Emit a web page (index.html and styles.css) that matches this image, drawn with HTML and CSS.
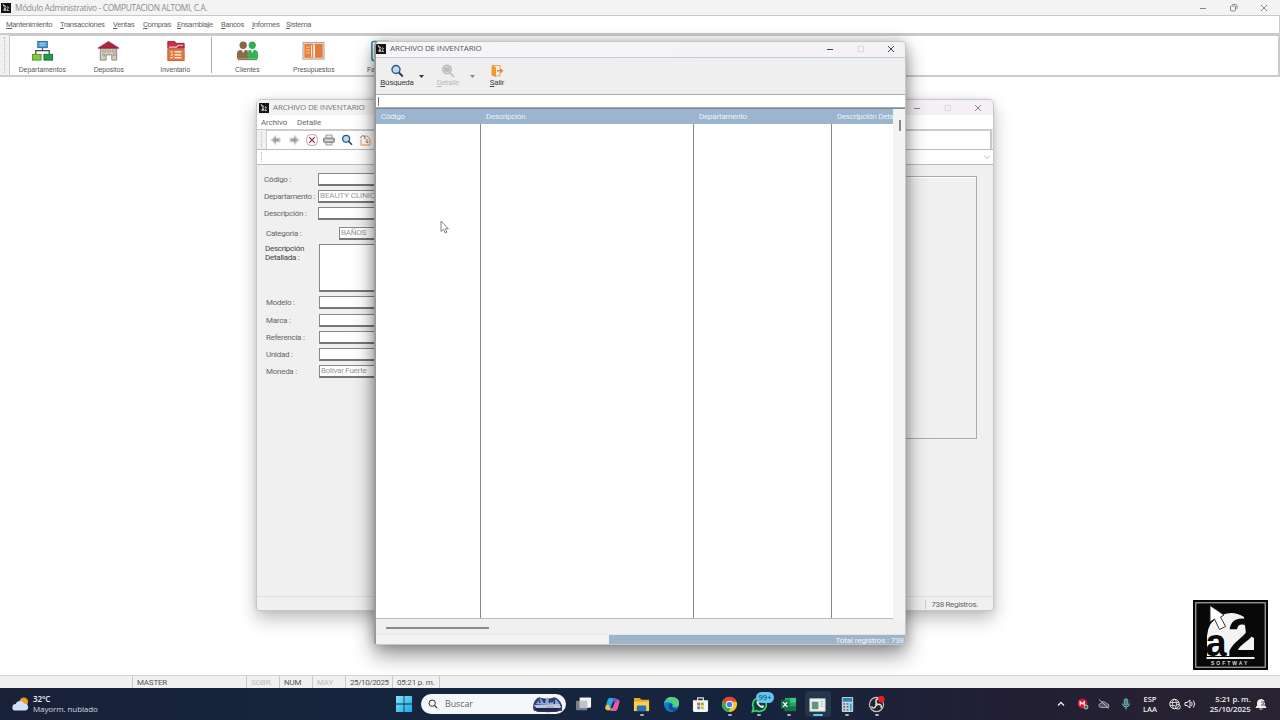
FILE: index.html
```html
<!DOCTYPE html>
<html lang="es">
<head>
<meta charset="utf-8">
<title>Módulo Administrativo</title>
<link rel="stylesheet" href="styles.css">
</head>
<body>
<svg class="defs" aria-hidden="true">
  <symbol id="app" viewBox="0 0 10 10"><rect width="10" height="10" fill="#151515"/><path d="M2 1.500l3 2.200-1.500.6zM3 5.500h1.500v2H2.800v-1h1.500M5.500 4.500q2-1.500 2 0L5.700 7.500H8" fill="none" stroke="#ddd" stroke-width=".8"/></symbol>
  <symbol id="min" viewBox="0 0 10 10"><path d="M2 5.500H8" stroke="currentColor"/></symbol>
  <symbol id="max" viewBox="0 0 10 10"><rect x="2" y="2.200" width="5.500" height="5.500" rx=".7" fill="none" stroke="currentColor" stroke-width=".8"/></symbol>
  <symbol id="close" viewBox="0 0 10 10"><path d="M2 2l6 6M8 2L2 8" stroke="currentColor" fill="none"/></symbol>
  <symbol id="lens" viewBox="0 0 14 14"><circle cx="6" cy="5.500" r="4" fill="#b9daf0" stroke="#31587c" stroke-width="1.400"/><path d="M8.800 8.500l4 4" stroke="#28405a" stroke-width="1.900"/></symbol>
  <symbol id="arrow" viewBox="0 0 12 12"><path d="M6 .5L.5 6 6 11.500V8.500h4.500v-5H6z" fill="#cfcfcf"/><path d="M2.500 6L6 3v2h3v2H6v2z" fill="#9a9a9a"/></symbol>
</svg>

<header class="titlebar">
  <svg class="app-icon"><use href="#app"/></svg>
  <span class="title">Módulo Administrativo - COMPUTACION ALTOMI, C.A.</span>
  <div class="controls"><svg><use href="#min"/></svg><svg viewBox="0 0 10 10"><rect x="1.500" y="3" width="5" height="5" rx="1" fill="none" stroke="currentColor"/><path d="M3.500 1.500h3q1.500 0 1.500 1.500v3" fill="none" stroke="currentColor"/></svg><svg><use href="#close"/></svg></div>
</header>
<nav class="menu">
  <span><u>M</u>antenimiento</span><span><u>T</u>ransacciones</span><span><u>V</u>entas</span><span><u>C</u>ompras</span><span><u>E</u>nsamblaje</span><span><u>B</u>ancos</span><span><u>I</u>nformes</span><span><u>S</u>istema</span>
</nav>
<div class="toolbar">
  <i class="grip"></i>
  <div class="tools">
    <div class="tool"><svg viewBox="0 0 24 22"><rect x="7" y="1" width="10" height="6.500" fill="#49a3dc" stroke="#356a92"/><path d="M9 3h6M9 5h6" stroke="#bde2f6" stroke-width=".8"/><path d="M12 8v3M5 14v-3.500h14V14" fill="none" stroke="#39464f" stroke-width="1.300"/><rect x="1.500" y="14.500" width="9" height="6" fill="#80ca38" stroke="#55932d"/><rect x="13.500" y="14.500" width="9" height="6" fill="#239b49" stroke="#17743a"/></svg><span class="wide">Departamentos</span></div>
    <div class="tool"><svg viewBox="0 0 24 22"><path d="M3.500 8h17v12.500h-5V15h-6v5.500h-6z" fill="#d5d0bd" stroke="#8a887c"/><path d="M1 8l11-7 11 7z" fill="#ad2440" stroke="#811d31" stroke-width=".7"/><path d="M6 10h3v2H6zM11 10h3v2h-3zM16 10h3v2h-3zM6 14h2v2H6zM17 14h2v2h-2z" fill="#eeeade" stroke="#88867c" stroke-width=".7"/></svg><span>Depositos</span></div>
    <div class="tool"><svg viewBox="0 0 24 22"><path d="M4 1h7l2 2h8v5H4z" fill="#c72f45" stroke="#94283a"/><path d="M5 7h8l2-2h5" fill="none" stroke="#f5c9bd" stroke-width="1.200"/><rect x="4" y="9" width="17" height="12" fill="#e8783e" stroke="#bd6238"/><path d="M7 12h2m2 0h7M7 15h2m2 0h7M7 18h2m2 0h7" stroke="#fff" stroke-width="1.300"/></svg><span>Inventario</span></div>
    <i class="rule"></i>
    <div class="tool"><svg viewBox="0 0 24 22"><circle cx="7.500" cy="5" r="3.800" fill="#8b6545"/><circle cx="17" cy="5" r="3.800" fill="#38ac4e"/><path d="M1 19v-5q0-4 4-4h5q3 0 3 4v5z" fill="#94694a"/><path d="M12 19v-5q0-4 3-4h4q4 0 4 4v5z" fill="#35b34f"/><path d="M5.500 10l2 3 2-3M15.500 10l1.500 3 1.500-3" fill="#eee"/><path d="M2 20h20" stroke="#4f644b"/></svg><span>Clientes</span></div>
    <div class="tool"><svg viewBox="0 0 24 22"><rect x="1" y="2" width="22" height="17.500" fill="#e4dfd6" stroke="#aaa49b"/><rect x="2.500" y="3.500" width="9" height="14.500" fill="#ed7d31"/><rect x="13" y="3.500" width="8.500" height="14.500" fill="#e77a38"/><path d="M4 7h4M4 10h4M4 13h4" stroke="#ffd5ae"/><path d="M10 5v12M13 5v12" stroke="#fff"/></svg><span>Presupuestos</span></div>
    <div class="tool"><svg viewBox="0 0 24 22"><rect x="3" y="1" width="19" height="20" rx="2" fill="#fff" stroke="#258ba6" stroke-width="1.600"/></svg><span>Facturas</span></div>
  </div>
</div>

<main class="desktop">
  <section class="window back">
    <div class="win-title"><svg class="app-icon"><use href="#app"/></svg><span>ARCHIVO DE INVENTARIO</span>
      <div class="controls"><svg><use href="#min"/></svg><svg class="off"><use href="#max"/></svg><svg><use href="#close"/></svg></div></div>
    <div class="win-menu"><span>Archivo</span><span>Detalle</span></div>
    <div class="back-tools"><i class="grip"></i><div class="back-icons">
      <svg><use href="#arrow"/></svg>
      <svg viewBox="0 0 12 12"><path d="M6 .5L11.500 6 6 11.500V8.500H1.500v-5H6z" fill="#cfcfcf"/><path d="M9.500 6L6 3v2H3v2h3v2z" fill="#9a9a9a"/></svg>
      <svg viewBox="0 0 12 12"><rect x=".6" y=".6" width="10.800" height="10.800" rx="4" fill="#fffafa" stroke="#b58b94" stroke-width=".8"/><path d="M3.200 3.200l5.600 5.600M8.800 3.200L3.200 8.800" stroke="#8d3346" stroke-width="1.200"/></svg>
      <svg viewBox="0 0 12 12"><path d="M3 4V1h6v3M3 8v3h6V8" fill="#eee" stroke="#999"/><rect x=".5" y="4" width="11" height="4.500" rx="1" fill="#aaa" stroke="#888"/><path d="M2 6.200h8" stroke="#eee"/></svg>
      <svg viewBox="0 0 14 14"><use href="#lens"/></svg>
      <svg viewBox="0 0 12 12"><path d="M2 5v6h9V5L8 2H5" fill="#fff" stroke="#e69a5c"/><path d="M1.500 4q1.500-4 4.500-1v2" fill="none" stroke="#466d8b"/><path d="M8 5v4M6.500 7.500L8 9l1.500-1.500" fill="none" stroke="#d67332"/></svg>
    </div></div>
    <div class="back-combo"><i class="grip"></i><span class="combo"><svg viewBox="0 0 8 8"><path d="M1 2.500l3 3 3-3" fill="none" stroke="#bbb"/></svg></span></div>
    <div class="back-body">
      <div class="form">
        <label class="row"><span>Código :</span><b class="field"></b></label>
        <label class="row"><span>Departamento :</span><b class="field caps">BEAUTY CLINICA</b></label>
        <label class="row"><span>Descripción :</span><b class="field"></b></label>
        <label class="row category"><span>Categoria :</span><b class="field">BAÑOS</b></label>
        <label class="row detail"><span>Descripción<br>Detallada :</span><b class="field"></b></label>
        <label class="row low"><span>Modelo :</span><b class="field"></b></label>
        <label class="row low"><span>Marca :</span><b class="field"></b></label>
        <label class="row low"><span>Referencia :</span><b class="field"></b></label>
        <label class="row low"><span>Unidad :</span><b class="field"></b></label>
        <label class="row low"><span>Moneda :</span><b class="field">Bolívar Fuerte</b></label>
      </div>
      <div class="group"></div>
    </div>
    <div class="back-status"><span>738 Registros.</span></div>
  </section>

  <section class="window front">
    <div class="win-title"><svg class="app-icon"><use href="#app"/></svg><span>ARCHIVO DE INVENTARIO</span>
      <div class="controls"><svg><use href="#min"/></svg><svg class="off"><use href="#max"/></svg><svg><use href="#close"/></svg></div></div>
    <div class="front-tools">
      <div class="ftool"><svg><use href="#lens"/></svg><span><u>B</u>úsqueda</span></div><i class="caret"></i>
      <div class="ftool dim"><svg viewBox="0 0 14 14"><circle cx="6" cy="5.500" r="4.300" fill="#ddd" stroke="#bbb" stroke-width="1.400"/><path d="M4 4h4v3H4zM9 9l4 4" fill="#bbb" stroke="#bbb" stroke-width="1.500"/></svg><span><u>D</u>etalle</span></div><i class="caret grey"></i>
      <div class="ftool exit"><svg viewBox="0 0 14 14"><path d="M1.500 1.500l4.500 1.500v10l-4.500-1.500z" fill="#f09a31"/><path d="M2 1.500h8v3M10 9v3H6" fill="none" stroke="#e5a55c"/><path d="M7 6.800h5M10 4.700l2.300 2.100L10 9" fill="none" stroke="#e58620" stroke-width="1.400"/></svg><span><u>S</u>alir</span></div>
    </div>
    <div class="search-line"><i></i></div>
    <div class="grid-area">
      <div class="table">
        <div class="col"><div class="th">Código</div></div><div class="col"><div class="th">Descripción</div></div><div class="col"><div class="th">Departamento</div></div><div class="col"><div class="th">Descripción Deta</div></div>
      </div>
      <div class="vscroll"><i></i></div>
    </div>
    <div class="hscroll"><i></i></div>
    <div class="front-status"><span>Total registros : 738</span></div>
  </section>

  <svg class="pointer" viewBox="0 0 9 14"><path d="M1 1v10.500l2.500-2.200L5.200 13l1.700-.8L5.300 8.700h3z" fill="#fff" stroke="#777" stroke-width=".9"/></svg>

  <svg class="brand" viewBox="0 0 75 70">
    <rect width="75" height="70" fill="#080808"/><rect x="2.800" y="2.800" width="69.400" height="64.400" fill="none" stroke="#ccc" stroke-width="1"/>
    <path d="M14 56V36a24 24 0 0 1 37-19l2 17 8 4v18z" fill="#f4f4f4"/>
    <text x="12.500" y="55.500" class="brand-a">a</text><text x="34.500" y="55.500" class="brand-2">2</text>
    <path d="M13.500 58h48" stroke="#eee" stroke-width="2.200"/>
    <path d="M17 5.500l14 9.500-3.500 2 5 9.500-6 3-5-10.500-4.500 3z" fill="#fff" stroke="#222" stroke-width=".9"/>
    <text x="18" y="64.500" class="brand-name">SOFTWAY</text>
  </svg>
</main>

<footer class="status"><span></span><span>MASTER</span><span class="dis">SOBR.</span><span>NUM</span><span class="dis">MAY</span><span class="date">25/10/2025</span><span>05:21 p. m.</span><span></span></footer>

<div class="taskbar">
  <div class="weather"><svg viewBox="0 0 18 16"><circle cx="12.500" cy="5.500" r="4.500" fill="#f39a2b"/><path d="M4 15a3.500 3.500 0 0 1-.2-7 5 5 0 0 1 9-.5A3.800 3.800 0 0 1 14 15z" fill="#cfe0fa"/></svg><p>32°C<br><span>Mayorm. nublado</span></p></div>
  <svg class="start" viewBox="0 0 16 16"><defs><linearGradient id="w" x2="1" y2="1"><stop stop-color="#7ce6fb"/><stop offset="1" stop-color="#1aa7ea"/></linearGradient></defs><path d="M0 0h7.600v7.600H0zM8.400 0H16v7.600H8.400zM0 8.400h7.600V16H0zM8.400 8.400H16V16H8.400z" fill="url(#w)"/></svg>
  <div class="search"><svg viewBox="0 0 12 12"><circle cx="5" cy="5" r="3.800" fill="none" stroke="#333" stroke-width="1.200"/><path d="M7.800 7.800l3.200 3.200" stroke="#333" stroke-width="1.300"/></svg><span>Buscar</span>
    <svg class="ship" viewBox="0 0 32 17"><path d="M1 12q0-8 6-11 9 3 16 0 5 1 8 8v6q-15 3-29 0z" fill="#38406f"/><path d="M4 8l5-6 3 5 4-6 4 6 5-4 4 6z" fill="#85a9da"/><path d="M8 7V4M13 7V3M18 7V3M23 8V4" stroke="#2c3068" stroke-width="1.500"/><path d="M2 9l26-1 2 3-4 3H6z" fill="#b9c9de"/><path d="M3 12h26l-3 4H5z" fill="#232652"/><path d="M14 11h8" stroke="#c39298"/></svg></div>
  <div class="apps">
    <div><svg viewBox="0 0 18 18"><rect x="1" y="5" width="12" height="10" rx="1" fill="#777f87"/><rect x="5" y="1.500" width="12" height="11" rx="1" fill="#f2f2f2"/><path d="M5 5h8v7.500H5z" fill="#bfc3c7"/></svg></div>
    <div><svg viewBox="0 0 18 18"><path d="M6 2h4q2 0 1.500 2L9 13q-.5 2-3 2H4q-3 0-2.500-3L3.500 5Q4 2 6 2z" fill="#27a7e5"/><path d="M12 3q4 0 4.500 3l-1.800 7q-.7 3-3.700 3H7l3-12z" fill="#e55b9d"/><path d="M2 10l3-1 2 6H4q-3 0-2.500-3z" fill="#ecc43d"/><path d="M9 2h3q2 1 2 4l-4 1z" fill="#6b55d8"/><path d="M10.500 6L8 12.500" stroke="#18253f" stroke-width="2"/></svg></div>
    <div class="run"><svg viewBox="0 0 18 18"><path d="M1 2h6l2 2h8v12H1z" fill="#eaa820"/><path d="M1 6h16v10H1z" fill="#ffd04e"/><path d="M4 11q0-1 1-1h8q1 0 1 1v5H4z" fill="#2772bd"/></svg></div>
    <div><svg viewBox="0 0 18 18"><circle cx="9" cy="9" r="8" fill="#1879c9"/><path d="M1 8Q3 1 9 1q8 0 8 7 0 4-5 4-3 0-2-3-3-4-9-1z" fill="#38c7b2"/><path d="M9 1q8 0 8 7 0 4-5 4 2-3-2-5Q7 2 3 4q2-3 6-3z" fill="#59cf76"/><path d="M10 9q-2 4 6 5-4 3-8 1-4-3-1-7 2-1 3 1z" fill="#14508f"/></svg></div>
    <div><svg viewBox="0 0 18 18"><path d="M6 5V2h6v3" fill="none" stroke="#ddd" stroke-width="1.300"/><path d="M1 4.500h16V15q0 2-2 2H3q-2 0-2-2z" fill="#f4f6f8"/><path d="M5.500 7H8.600v3H5.500z" fill="#ee5632"/><path d="M9.400 7h3.100v3H9.400z" fill="#82b82d"/><path d="M5.500 11h3.100v3H5.500z" fill="#2b9be0"/><path d="M9.400 11h3.100v3H9.400z" fill="#f1b524"/></svg></div>
    <div class="run"><svg viewBox="0 0 18 18"><circle cx="9" cy="9" r="8" fill="#f6c62c"/><path d="M2 5a8 8 0 0 1 14.500 1H9L5.500 11z" fill="#e84437"/><path d="M2 5l4 6 4 2-2 4A8 8 0 0 1 2 5z" fill="#34a853"/><circle cx="9" cy="9" r="4" fill="#fff"/><circle cx="9" cy="9" r="3" fill="#3f82e8"/></svg></div>
    <div class="run"><svg viewBox="0 0 18 18"><path d="M1.500 16.500l1.200-4A7.200 7.200 0 1 1 5.800 15.500z" fill="#183c38" stroke="#37d36c" stroke-width="1.800"/><path d="M6 5.500q-1 2 2 5t5 2l1-2-2-1-1 1Q9 9.500 8 8l1-1-1-2z" fill="#dff5e5"/></svg><em>99+</em></div>
    <div class="run"><svg viewBox="0 0 18 18"><rect x="5" y="2" width="12" height="14" fill="#21a366"/><path d="M11 2h6v5h-6z" fill="#40c77e"/><path d="M5 11h12v5H5z" fill="#147442"/><rect x="1" y="4.500" width="9" height="9" fill="#167746"/><path d="M3.300 6.500l4.400 5M7.700 6.500l-4.400 5" stroke="#fff" stroke-width="1.400"/></svg></div>
    <div class="run active"><svg viewBox="0 0 18 18"><rect x="1" y="3" width="16" height="13" fill="#f4f4ee" stroke="#cdd5d5"/><rect x="3" y="6" width="7" height="8" fill="#609681"/><path d="M12 6h3M12 8.500h3M12 11h3" stroke="#a4b5b1"/></svg></div>
    <div class="run"><svg viewBox="0 0 18 18"><rect x="3" y="1" width="12" height="16" rx="1" fill="#c5d3dc"/><rect x="4" y="2" width="10" height="4" fill="#2a85b9"/><path d="M4.500 8.500h6M4.500 11.500h6M4.500 14.500h6" stroke="#5c7382" stroke-width="1.700" stroke-dasharray="2 1.500"/><path d="M12.500 8v7.500" stroke="#38a2d1" stroke-width="2"/></svg></div>
    <div class="run"><svg viewBox="0 0 18 18"><circle cx="9" cy="9" r="7.500" fill="#24242a" stroke="#c9c9cc" stroke-width="1.200"/><path d="M9 8Q7 3 11 3M10 9q5-1 4 4M8.500 10q-2 5-5 1" fill="none" stroke="#ddd" stroke-width="1.700"/><circle cx="9" cy="9" r="1.500" fill="#ddd"/><circle cx="14" cy="3.500" r="3.500" fill="#ef1c23"/></svg></div>
  </div>
  <div class="tray">
    <svg viewBox="0 0 12 12"><path d="M3 7.500l3-3 3 3" fill="none" stroke="#eee" stroke-width="1.300"/></svg>
    <svg viewBox="0 0 12 12"><circle cx="5.500" cy="5.500" r="4.800" fill="#d9142c"/><path d="M3.200 7.500V3.800l2 2 2-2v3.700" fill="none" stroke="#fff" stroke-width="1.200"/><circle cx="9" cy="9" r="2" fill="#28783e" stroke="#ddd" stroke-width=".8"/></svg>
    <svg viewBox="0 0 12 12"><path d="M3 9.500q-2.500-.5-2-3 1-1.500 2-1 2-4 5.500 0 3 .5 2.500 3l-2 1z" fill="#555364" stroke="#aaa"/><path d="M1 1.500l10 9" stroke="#bbb"/></svg>
    <svg viewBox="0 0 12 12"><rect x="4.200" y=".8" width="3.600" height="6.500" rx="1.800" fill="#527f80" stroke="#72d4cd" stroke-width=".8"/><path d="M2.500 5.500q.3 3.500 3.500 3.500t3.500-3.500M6 9v2.500" fill="none" stroke="#72d4cd"/></svg>
    <p class="lang">ESP<br>LAA</p>
    <svg viewBox="0 0 12 12"><circle cx="5.500" cy="6" r="4.700" fill="none" stroke="#eee"/><ellipse cx="5.500" cy="6" rx="2" ry="4.700" fill="none" stroke="#eee" stroke-width=".8"/><path d="M1 4.500h9M1 7.500h5" stroke="#eee" stroke-width=".8"/><circle cx="9" cy="8.800" r="2.300" fill="#33303e" stroke="#eee" stroke-width=".9"/><path d="M7.600 10.200l2.700-2.700" stroke="#eee" stroke-width=".8"/></svg>
    <svg class="volume" viewBox="0 0 12 12"><path d="M1 4.500h2l3-2.500v8L3 7.500H1zM7.500 4q1.500 2 0 4M9.300 2.500q3 3.500 0 7" fill="none" stroke="#eee"/></svg>
    <p class="clock">5:21 p. m.<br>25/10/2025</p>
    <svg class="bell" viewBox="0 0 12 12"><path d="M1 9.500l1.500-2V5q0-3.500 3.500-3.500T9.500 5v2.500l1.500 2zM4.500 11h3" fill="#eee" stroke="#eee"/><path d="M6 4h4L6.500 7H10" fill="none" stroke="#35303c" stroke-width=".8"/></svg>
  </div>
</div>
</body>
</html>
```
FILE: styles.css
```css
* { box-sizing: border-box; }
body {
  margin: 0; width: 1280px; height: 720px; overflow: hidden;
  display: grid; grid-template-rows: 16px 18px 43px 598px 13px 32px;
  background: #fff; color: #666;
  font: 8px "Roboto", "Liberation Sans", sans-serif;
}
p { margin: 0; }
u { text-underline-offset: 1px; text-decoration-thickness: .7px; }
.defs { position: absolute; width: 0; height: 0; }
.titlebar { display: flex; align-items: center; background: #f3f3f3; border-bottom: 1px solid #c9c9c9; padding-left: 1px; font: 8.300px "Open Sans", sans-serif; color: #8b8b8b; }
.app-icon { width: 10px; height: 10px; margin-right: 4px; flex: none; }
.title { letter-spacing: -.31px; }
.controls { margin-left: auto; display: flex; gap: 20.500px; padding-right: 11px; color: #888; }
.controls svg { width: 10px; height: 10px; }
.menu { display: grid; grid-template-columns: 54px 53px 30px 34px 44px 31px 34px 30px; align-items: center; padding: 0 0 0 6px; border-right: 1px solid #ccc; border-bottom: 1px solid #ccc; font-size: 7.600px; letter-spacing: -.36px; white-space: nowrap; }
.toolbar { display: flex; background: #f1f1f1; border-top: 1px solid #c9c9c9; border-bottom: 2px solid #ccc; border-right: 2px solid #ccc; }
.grip { width: 2px; margin: 2px 3px 2px 4px; border-left: 1px dotted #bbb; flex: none; }
.tools { flex: 1; display: flex; background: #fff; border-left: 1px solid #ccc; border-top: 1px solid #ccc; }
.tool { width: 66.500px; display: flex; flex-direction: column; align-items: center; padding-top: 4px; font: 6.800px "Liberation Sans", sans-serif; color: #555; }
.tool svg { width: 23px; height: 22px; margin-bottom: 4px; }
.tool .wide { letter-spacing: .06px; }
.tool:first-child { margin-left: -1px; }
.rule { width: 1px; margin: 1px 2px 2px 2.500px; background: #aaa; }
.desktop { position: relative; }
.window { position: absolute; display: flex; flex-direction: column; background: #f0f0f0; overflow: hidden; border-radius: 5px 5px 3px 3px; }
.back { left: 256px; top: 22px; width: 738px; height: 512px; border: 1px solid #c8c8c8; box-shadow: 0 8px 18px rgba(0,0,0,.26), 0 0 5px rgba(0,0,0,.09); }
.front { left: 374px; top: -36px; width: 532px; height: 604px; border: 1px solid #c6c6c6; border-left: 2px solid #9a9a9a; box-shadow: 0 10px 21px rgba(0,0,0,.42), 0 0 12px rgba(0,0,0,.22); }
.win-title { flex: none; height: 15px; display: flex; align-items: center; font: 8px/10px "Open Sans", sans-serif; letter-spacing: -.16px; background: linear-gradient(90deg, #f3f3f5, #f6f0f6); padding-left: 2px; color: #777; }
.win-title > span { padding-bottom: 1px; }
.front .win-title { height: 16px; background: linear-gradient(90deg, #f5f6f9, #f6f1f6); border-bottom: 1px solid #c4cdd5; padding: 0 0 1px; color: #555; }
.front .win-title > span { padding-bottom: 2px; }
.front .win-title .controls { color: #444; padding-right: 9px; }
.back .win-title .controls { color: #888; padding-right: 10px; }
.win-title .controls svg.off { color: #d3ced3; }
.win-menu { height: 14px; flex: none; background: #fff; display: flex; gap: 10px; align-items: center; padding-left: 4px; font-size: 7.800px; }
.back-tools { height: 21px; flex: none; display: flex; border-top: 1px solid #ccc; border-bottom: 1px solid #bbb; }
.back-icons { flex: 1; display: flex; align-items: center; gap: 5.800px; padding-left: 3px; background: #fff; border-left: 1px solid #ccc; border-top: 1px solid #ccc; border-right: 2px solid #c8c8c8; margin-right: 1px; }
.back-icons svg { width: 12px; height: 12px; }
.back-combo { height: 15px; flex: none; display: flex; border-bottom: 1px solid #bbb; background: #fff; }
.back-combo .grip { margin-right: 0; }
.combo { flex: 1; display: flex; justify-content: flex-end; align-items: center; padding-right: 2px; }
.combo svg { width: 8px; height: 8px; }
.back-body { flex: 1; display: flex; gap: 120px; padding: 6px 16px 0 7px; }
.form { width: 270px; }
.row { display: flex; align-items: center; height: 17.200px; letter-spacing: -.27px; white-space: nowrap; }
.row > span { width: 54px; flex: none; }
.field { display: block; width: 190px; height: 13px; border: 1px solid #888; border-bottom: 2px solid #777; background: #fff; padding-left: 1px; font-weight: 400; line-height: 10px; color: #999; letter-spacing: -.25px; }
.field.caps { letter-spacing: -.1px; }
.category { height: 21px; padding-left: 2px; }
.category > span { width: 73px; }
.category .field { width: 160px; }
.detail { height: 50.500px; padding-left: 1px; align-items: flex-start; }
.detail > span { line-height: 9px; color: #444; }
.detail .field { height: 48px; }
.low { height: 17.300px; padding-left: 2px; }
.low > span { width: 53px; }
.group { flex: 1; height: 263px; margin-top: 5px; border: 1px solid #aaa; box-shadow: inset 1px 1px #fff; }
.back-status { height: 14px; flex: none; border-top: 1px solid #ddd; display: flex; justify-content: flex-end; align-items: center; padding: 2px 15px 0 0; }
.back-status span { border-left: 1px solid #ccc; padding-left: 5px; letter-spacing: -.33px; }
.front-tools { height: 36px; flex: none; display: flex; background: #efefef; }
.ftool { width: 42px; display: flex; flex-direction: column; align-items: center; padding-top: 6px; color: #444; letter-spacing: -.28px; }
.ftool svg { width: 14px; height: 14px; }
.ftool span { line-height: 9px; }
.ftool.dim { width: 44px; color: #bbb; margin-left: 1px; }
.ftool.exit { width: 42px; margin-left: 1px; }
.caret { width: 5px; height: 3px; margin: 17px 1px 0; background: #333; clip-path: polygon(0 0, 100% 0, 50% 100%); }
.caret.grey { background: #888; margin-left: 0; margin-right: 0; }
.search-line { height: 14px; flex: none; background: #fff; border-top: 1px solid #aaa; border-bottom: 1px solid #aaa; padding: 2px 2px; }
.search-line i { display: block; width: 1px; height: 9px; background: #777; }
.grid-area { flex: 1; display: flex; border-top: 1px solid #788fa3; }
.table { flex: 1; display: grid; grid-template-columns: 105px 213px 138px 1fr; min-width: 0; border-bottom: 1px solid #bbb; background: #fff; }
.col { display: flex; flex-direction: column; min-width: 0; background: linear-gradient(#888, #888) right / 1px 100% no-repeat; }
.col:last-child { background: #fff; }
.th { height: 15px; background: #9bb5ce; color: #e9f2fb; padding-left: 5px; line-height: 15px; white-space: nowrap; letter-spacing: -.24px; }
.vscroll { width: 12px; background: #f3f3f3; padding: 11px 0 0 6px; }
.vscroll i { display: block; width: 2px; height: 11px; background: #888; }
.hscroll { height: 16px; flex: none; background: #f0f0f0; padding: 8px 0 0 10px; border-bottom: 1px solid #e5e5e5; }
.hscroll i { display: block; width: 103px; height: 2px; background: #8b8b8b; }
.front-status { height: 9px; flex: none; display: flex; justify-content: flex-end; background: #f2f2f2; }
.front-status span { width: 296px; background: #9db5ca; color: #f2f7fb; text-align: right; line-height: 11px; padding-right: 1px; letter-spacing: -.1px; white-space: nowrap; }
.pointer { position: absolute; left: 440px; top: 143px; width: 9px; height: 14px; }
.brand { position: absolute; left: 1193px; top: 523px; width: 75px; height: 70px; }
.brand-a { font: bold 38px "Liberation Sans", sans-serif; fill: #080808; }
.brand-2 { font: bold 53px "Liberation Sans", sans-serif; fill: #080808; }
.brand-name { font: bold 5px "Liberation Sans", sans-serif; letter-spacing: 2px; fill: #ddd; }
.status { display: grid; grid-template-columns: 132px 114px 33px 33px 33px 47px 47px 1fr; border-top: 1px solid #d7d7d7; background: #f0f0f0; line-height: 14px; letter-spacing: -.2px; color: #555; }
.status span { padding-left: 4px; border-left: 1px solid #c8c8c8; white-space: nowrap; }
.status span:first-child { border: 0; }
.status .dis { color: #bbb; }
.status .date { letter-spacing: -.4px; }
.taskbar { display: flex; align-items: center; background: linear-gradient(90deg, #192139, #15263f 38%, #17233d 60%, #231f33 80%, #282433); color: #eee; font: 8px "Open Sans", sans-serif; }
.weather { width: 396px; padding-left: 12px; display: flex; align-items: center; gap: 4px; line-height: 10.500px; font-weight: 600; letter-spacing: -.1px; }
.weather span { font-weight: 400; color: #d5d8df; }
.weather svg { width: 17px; height: 16px; }
.start { width: 16px; height: 16px; margin-right: 9px; }
.search { width: 145px; height: 20px; border-radius: 10px; background: #f4f7fb; color: #666; font-size: 8.800px; display: flex; align-items: center; padding-left: 7px; }
.search svg { width: 10px; height: 10px; margin-right: 7px; }
.search .ship { width: 31px; height: 17px; margin: 0 3px 0 auto; }
.apps { display: grid; grid-template-columns: repeat(11, 29.350px); height: 32px; margin-left: 2.500px; }
.apps div { position: relative; display: flex; justify-content: center; align-items: center; }
.apps svg { width: 17px; height: 17px; }
.run::after { content: ""; position: absolute; bottom: 4px; width: 4px; height: 2px; border-radius: 1px; background: #a9afb9; }
.apps .active { background: #24364a; margin: 3px 2px; border-radius: 3px; }
.apps .active::after { width: 10px; bottom: 1px; background: #61c8ed; }
.apps em { position: absolute; left: 11px; top: 4px; padding: 0 3px; border-radius: 6px; background: #62c5f2; color: #173546; font: 7.500px/11px "Open Sans", sans-serif; }
.tray { margin-left: auto; display: flex; align-items: center; gap: 9.500px; font-size: 7.500px; line-height: 10.500px; padding-right: 13px; font-weight: 600; }
.tray svg { width: 12px; height: 12px; }
.lang { width: 16px; text-align: center; margin: 0 1px; }
.tray .volume { margin-left: -6px; }
.clock { width: 45px; text-align: right; font-size: 7.800px; white-space: nowrap; letter-spacing: -.1px; }
.tray .bell { margin-left: -5px; }
```
